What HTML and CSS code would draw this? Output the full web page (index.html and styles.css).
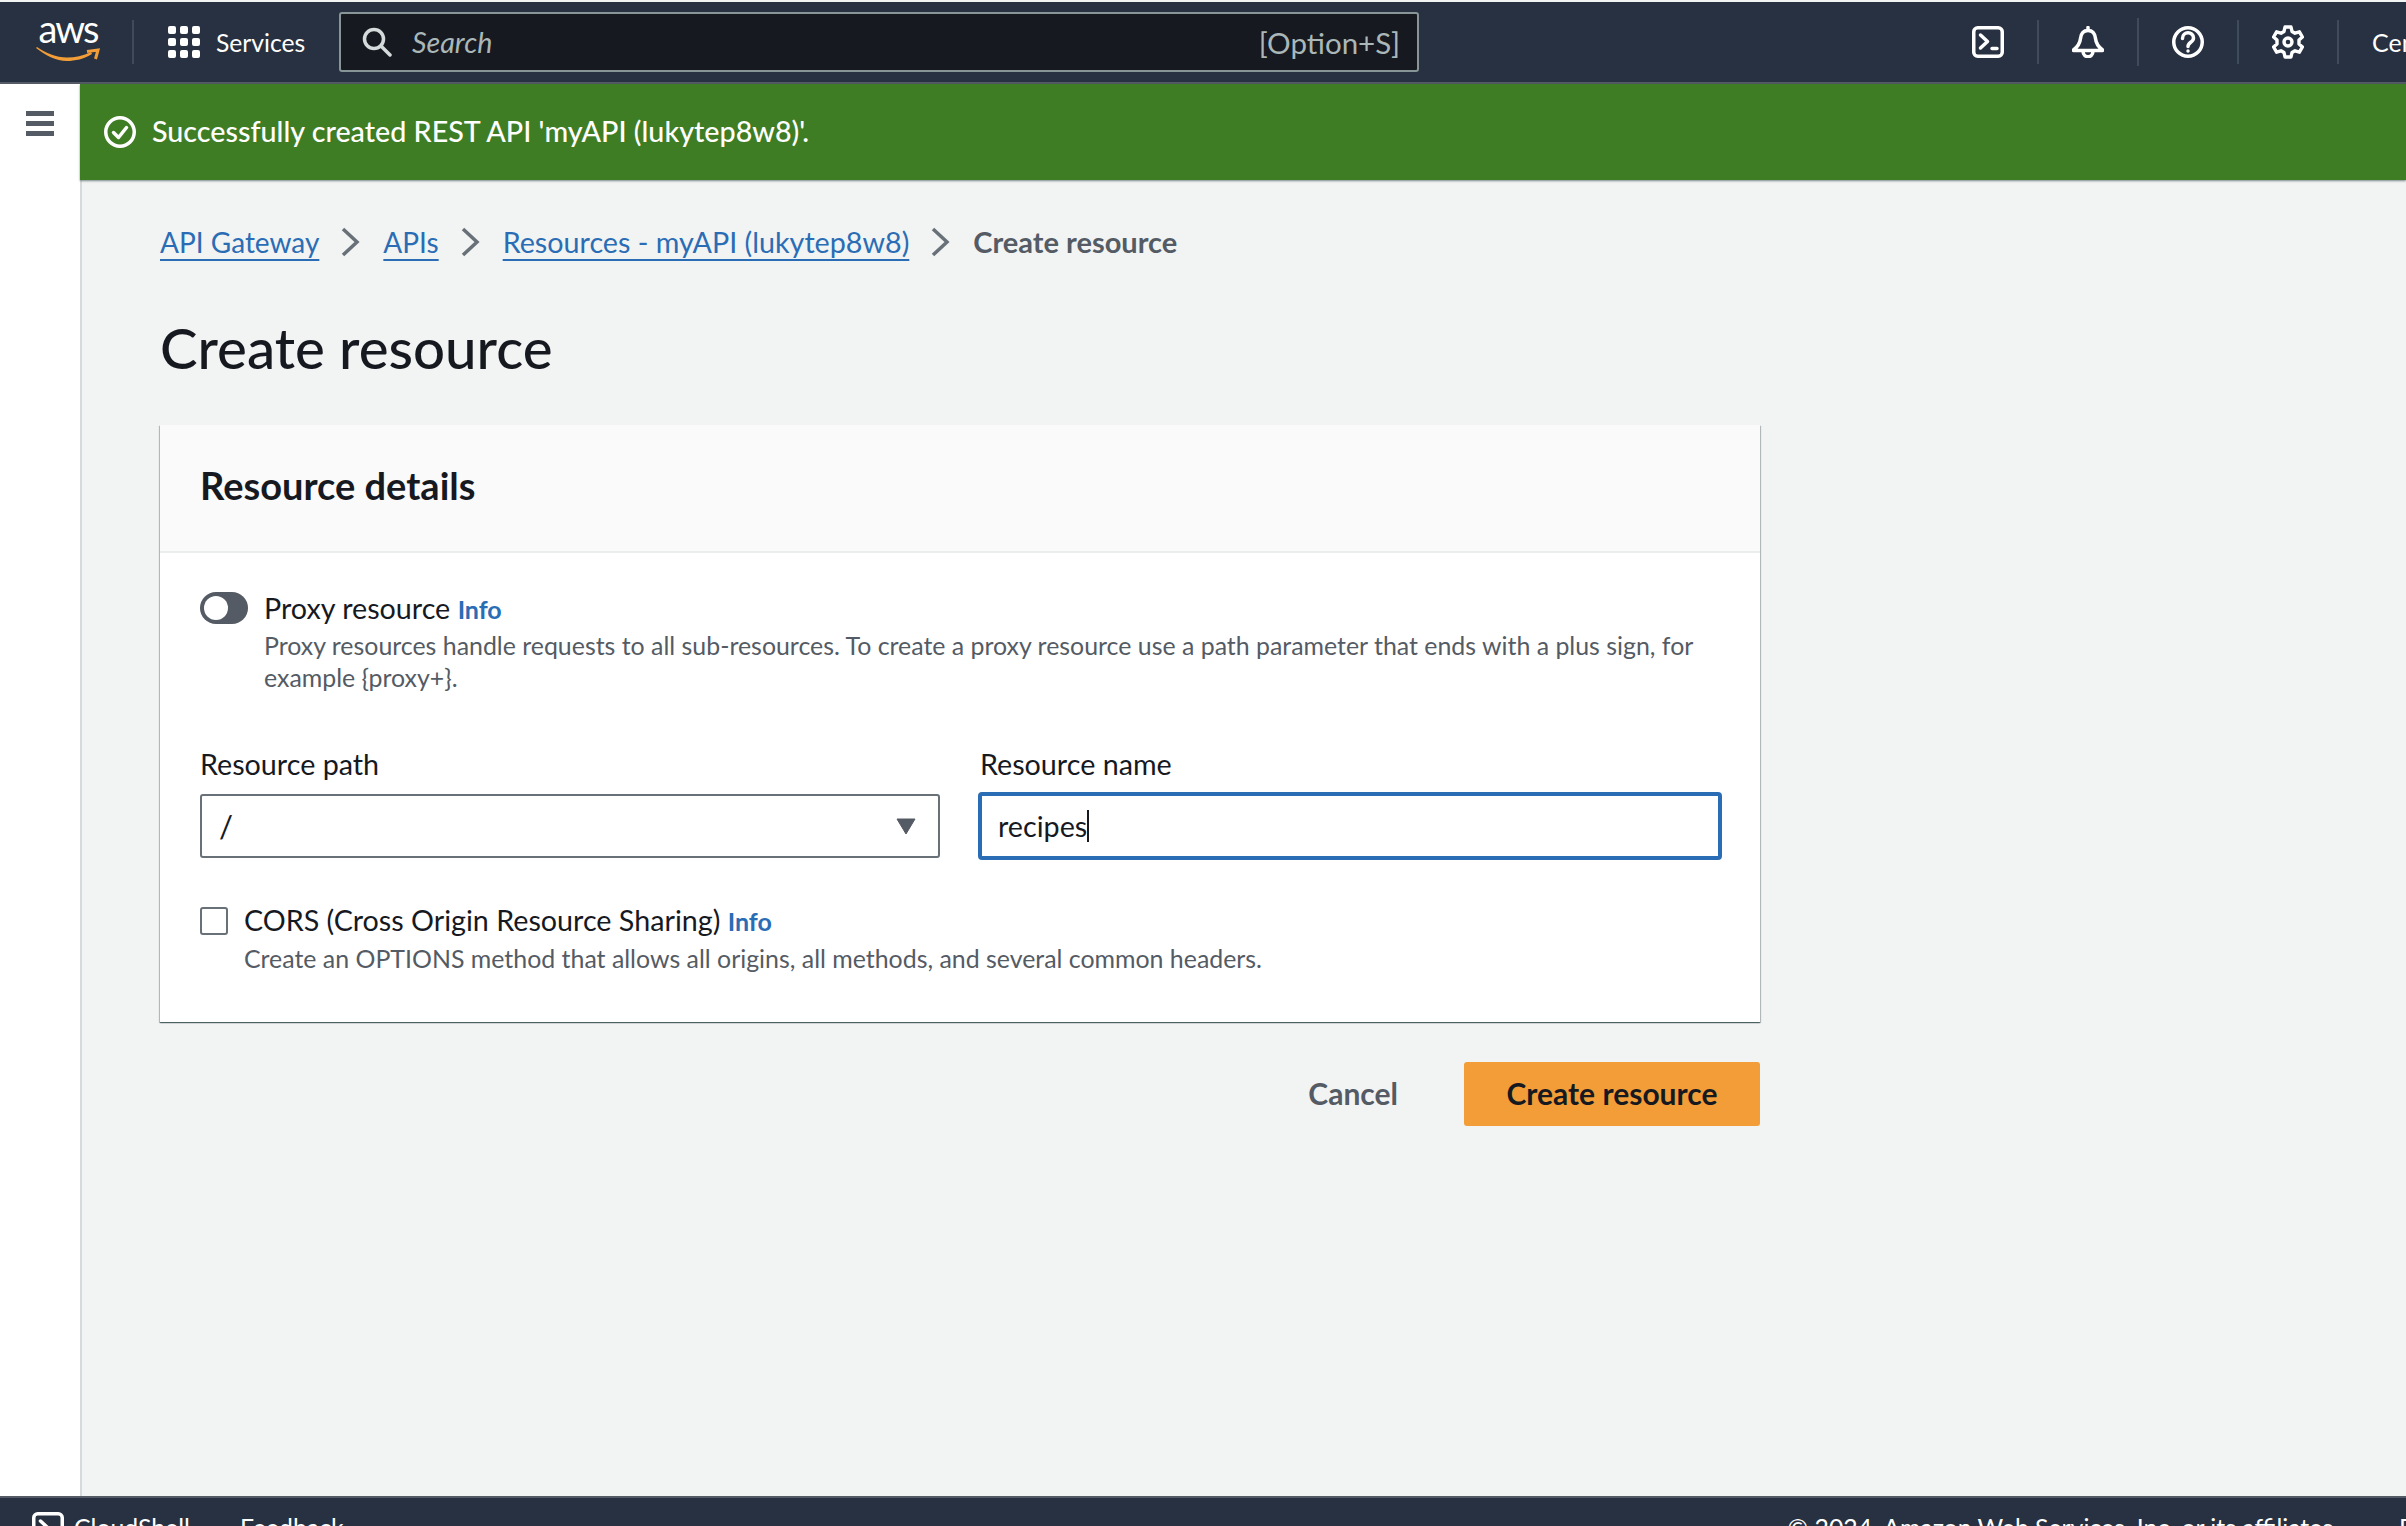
FILE: index.html
```html
<!DOCTYPE html>
<html lang="en">
<head>
  <meta charset="UTF-8">
  <title>Create resource</title>
  <link rel="stylesheet" href="styles.css">
</head>
<body>
  <header class="topnav">
    <div class="logo">
      <span class="logo-text">aws</span>
      <svg class="logo-smile" width="64" height="15" viewBox="0 0 64 15">
        <path d="M0 1C9 8 20 14 31 14 39 14 48 12 56 7L55 5C47 9 39 10.500 31 10.500 20 10.500 10 6 1 0z" fill="#f29d38"/>
        <path d="M51 4.500l11-1.500-2.500 9" fill="none" stroke="#f29d38" stroke-width="3"/>
      </svg>
    </div>
    <span class="nav-sep sep-logo"></span>
    <svg class="grid-icon" width="32" height="32" viewBox="0 0 32 32" fill="#fff">
      <rect x="0" y="0" width="8" height="8" rx="2"/><rect x="12" y="0" width="8" height="8" rx="2"/><rect x="24" y="0" width="8" height="8" rx="2"/>
      <rect x="0" y="12" width="8" height="8" rx="2"/><rect x="12" y="12" width="8" height="8" rx="2"/><rect x="24" y="12" width="8" height="8" rx="2"/>
      <rect x="0" y="24" width="8" height="8" rx="2"/><rect x="12" y="24" width="8" height="8" rx="2"/><rect x="24" y="24" width="8" height="8" rx="2"/>
    </svg>
    <span class="services">Services</span>
    <div class="search">
      <svg width="30" height="30" viewBox="0 0 30 30" fill="none" stroke="#d5dbdb" stroke-width="3.500">
        <circle cx="12" cy="12" r="9.500"/><path d="M19 19l9 9" stroke-linecap="round"/>
      </svg>
      <span class="search-text">Search</span>
      <span class="search-key">[Option+S]</span>
    </div>
    <div class="nav-icons">
      <span class="nav-cell">
        <svg width="32" height="32" viewBox="0 0 32 32" fill="none" stroke="#fff" stroke-width="3.500" stroke-linecap="round" stroke-linejoin="round">
          <rect x="1.750" y="1.750" width="28.500" height="28.500" rx="4"/><path d="M8.500 9l7 6.500-7 6.500M20 22.500h5"/>
        </svg>
      </span>
      <span class="nav-cell nav-cell-tall">
        <svg width="32" height="32" viewBox="0 0 32 32" fill="none" stroke="#fff" stroke-width="3.500" stroke-linecap="round" stroke-linejoin="round">
          <path d="M16 1.500v3M16 4.500c-4.500 0-7 3.500-7.500 8-.5 5-2.500 8-7 11.500v.5h29v-.5c-4.500-3.500-6.500-6.500-7-11.500-.5-4.500-3-8-7.500-8z"/><path d="M11 25c0 7.500 10 7.500 10 0"/>
        </svg>
      </span>
      <span class="nav-cell">
        <svg width="32" height="32" viewBox="0 0 32 32" fill="none" stroke="#fff" stroke-width="3.500" stroke-linecap="round" stroke-linejoin="round">
          <circle cx="16" cy="16" r="14.250"/><path d="M10.500 12.500c0-7.500 11-7.500 11-.5 0 4.500-5.500 4-5.500 8.500"/><path d="M16 25v.1"/>
        </svg>
      </span>
      <span class="nav-cell">
        <svg width="32" height="34" viewBox="0 0 32 34" fill="none" stroke="#fff" stroke-width="3.400" stroke-linejoin="round">
          <path d="M13 2h6l1 4.500 3 1.700 4.400-1.400 3 5.200-3.400 3.100v3.800l3.400 3.100-3 5.200-4.400-1.400-3 1.700-1 4.500h-6l-1-4.500-3-1.700-4.400 1.400-3-5.200 3.400-3.100v-3.800l-3.400-3.100 3-5.200 4.400 1.400 3-1.700z"/>
          <circle cx="16" cy="17" r="4"/>
        </svg>
      </span>
      <span class="nav-account">Central</span>
    </div>
  </header>

  <div class="layout">
    <aside class="sidebar">
      <div class="hamburger"><span></span><span></span><span></span></div>
    </aside>
    <div class="content">
      <div class="flash">
        <svg width="32" height="32" viewBox="0 0 32 32" fill="none" stroke="#fff" stroke-width="3.500" stroke-linecap="round" stroke-linejoin="round">
          <circle cx="16" cy="16" r="14.250"/><path d="M9.500 16.500l5 5 8-10"/>
        </svg>
        <span class="flash-text">Successfully created REST API 'myAPI (lukytep8w8)'.</span>
      </div>

      <main class="main">
        <nav class="crumbs">
          <a class="crumb-short" href="#">API Gateway</a>
          <svg class="crumb-sep" width="20" height="30" viewBox="0 0 20 30"><path d="M2 2l14 13L2 28" fill="none" stroke="#687078" stroke-width="3.500"/></svg>
          <a class="crumb-short" href="#">APIs</a>
          <svg class="crumb-sep" width="20" height="30" viewBox="0 0 20 30"><path d="M2 2l14 13L2 28" fill="none" stroke="#687078" stroke-width="3.500"/></svg>
          <a href="#">Resources - myAPI (lukytep8w8)</a>
          <svg class="crumb-sep" width="20" height="30" viewBox="0 0 20 30"><path d="M2 2l14 13L2 28" fill="none" stroke="#687078" stroke-width="3.500"/></svg>
          <span class="crumb-current">Create resource</span>
        </nav>

        <h1>Create resource</h1>

        <section class="card">
          <div class="card-header">
            <h2>Resource details</h2>
          </div>
          <div class="card-body">
            <div class="option">
              <span class="toggle"><span class="toggle-knob"></span></span>
              <div>
                <div class="option-label">Proxy resource <a class="info" href="#">Info</a></div>
                <p class="option-desc">Proxy resources handle requests to all sub-resources. To create a proxy resource use a path parameter that ends with a plus sign, for example {proxy+}.</p>
              </div>
            </div>

            <div class="fields">
              <div class="field">
                <label>Resource path</label>
                <div class="select">
                  <span class="select-value">/</span>
                  <svg width="20" height="17" viewBox="0 0 20 17"><path d="M1 1h18L10 16z" fill="#545b64" stroke="#545b64" stroke-linejoin="round"/></svg>
                </div>
              </div>
              <div class="field">
                <label>Resource name</label>
                <div class="text-input"><span class="typed">recipes</span></div>
              </div>
            </div>

            <div class="option option-cors">
              <span class="checkbox"></span>
              <div>
                <div class="option-label">CORS (Cross Origin Resource Sharing) <a class="info" href="#">Info</a></div>
                <p class="option-desc">Create an OPTIONS method that allows all origins, all methods, and several common headers.</p>
              </div>
            </div>
          </div>
        </section>

        <div class="actions">
          <button class="btn-link">Cancel</button>
          <button class="btn-primary">Create resource</button>
        </div>
      </main>
    </div>
  </div>

  <footer class="bottombar">
    <svg width="32" height="32" viewBox="0 0 32 32" fill="none" stroke="#fff" stroke-width="3.500" stroke-linecap="round" stroke-linejoin="round">
      <rect x="1.750" y="1.750" width="28.500" height="28.500" rx="4"/><path d="M8.500 9l7 6.500-7 6.500M20 22.500h5"/>
    </svg>
    <span class="foot-shell">CloudShell</span>
    <span class="foot-feedback">Feedback</span>
    <span class="foot-copy">© 2024, Amazon Web Services, Inc. or its affiliates.</span>
    <span class="foot-privacy">Privacy</span>
  </footer>
</body>
</html>
```

FILE: styles.css
```css
* {
  box-sizing: border-box;
}
html, body {
  height: 100%;
}
body {
  margin: 0;
  height: 1526px;
  overflow: hidden;
  display: flex;
  flex-direction: column;
  padding-top: 2px;
  font-family: "Lato", "Liberation Sans", sans-serif;
  font-size: 28.7px;
  color: #16191f;
  background-color: #f2f3f3;
}

/* top nav */
.topnav {
  flex: none;
  height: 82px;
  display: flex;
  align-items: center;
  overflow: hidden;
  background-color: #273141;
  border-bottom: 2px solid #545b64;
  color: #fff;
}
.logo {
  width: 64px;
  margin-left: 36px;
  position: relative;
  height: 44px;
  flex: none;
}
.logo-text {
  display: block;
  font-size: 38px;
  line-height: 16px;
  letter-spacing: -2px;
  text-align: center;
}
.logo-smile {
  position: absolute;
  left: 0;
  top: 27px;
}
.nav-sep {
  flex: none;
  width: 2px;
  height: 44px;
  background-color: #3f4a5a;
}
.sep-logo {
  margin-left: 32px;
}
.grid-icon {
  flex: none;
  margin-left: 34px;
}
.services {
  margin-left: 16px;
  width: 106px;
  font-size: 24.7px;
  flex: none;
}
.search {
  flex: none;
  margin-left: 17px;
  width: 1080px;
  height: 60px;
  display: flex;
  align-items: center;
  padding: 0 17px 0 21px;
  background-color: #16191f;
  border: 2px solid #879596;
  border-radius: 3px;
}
.search-text {
  margin-left: 20px;
  font-style: italic;
  color: #aab7b8;
}
.search-key {
  margin-left: auto;
  font-size: 29.500px;
  color: #aab7b8;
}
.nav-icons {
  flex: none;
  display: flex;
  align-items: center;
  margin-left: 520px;
}
.nav-cell {
  flex: none;
  width: 100px;
  height: 44px;
  display: flex;
  align-items: center;
  justify-content: center;
  border-right: 2px solid #3f4a5a;
}
.nav-cell-tall {
  height: 48px;
}
.nav-account {
  margin-left: 33px;
  font-size: 25px;
  flex: none;
}

/* layout */
.layout {
  flex: 1;
  min-height: 0;
  display: flex;
}
.sidebar {
  flex: none;
  width: 82px;
  background-color: #fff;
  border-right: 2px solid #d5dbdb;
  padding: 27px 0 0 26px;
}
.hamburger {
  width: 28px;
  display: flex;
  flex-direction: column;
  gap: 5px;
}
.hamburger span {
  height: 5px;
  background-color: #545b64;
}
.content {
  flex: 1;
  min-width: 0;
  margin-left: -2px;
  position: relative;
}
.flash {
  height: 96px;
  display: flex;
  align-items: center;
  gap: 16px;
  padding-left: 24px;
  background-color: #3f7d24;
  color: #fff;
  box-shadow: 0 1px 2px rgba(0, 28, 36, 0.5);
}
.flash-text {
  font-weight: 500;
  margin-top: -2px;
}
.main {
  padding: 46px 0 0 80px;
}

/* breadcrumbs */
.crumbs {
  display: flex;
  align-items: center;
  height: 32px;
}
.crumbs a {
  color: #2a6db5;
  text-decoration: underline;
  text-decoration-thickness: 2px;
  text-underline-offset: 6px;
}
.crumbs a.crumb-short {
  font-size: 28px;
}
.crumb-sep {
  margin: 0 22px 0 22px;
}
.crumb-current {
  margin-top: -1px;
  font-size: 29px;
  font-weight: 700;
  color: #545b64;
}
h1 {
  margin: 53px 0 0;
  font-size: 56.4px;
  line-height: 72px;
  font-weight: 500;
}

/* card */
.card {
  width: 1600px;
  margin-top: 42px;
  background-color: #fff;
  box-shadow: 0 1px 1px 0 rgba(0, 28, 36, 0.5), 1px 1px 1px 0 rgba(0, 28, 36, 0.2), -1px 1px 1px 0 rgba(0, 28, 36, 0.2);
}
.card-header {
  height: 128px;
  display: flex;
  align-items: center;
  padding: 0 0 6px 40px;
  background-color: #fafafa;
  border-bottom: 2px solid #eaeded;
}
h2 {
  margin: 0;
  font-size: 38px;
  font-weight: 700;
}
.card-body {
  padding: 37px 40px 48px;
}
.option {
  display: flex;
  gap: 16px;
}
.option-label {
  line-height: 36px;
  margin-bottom: 2px;
}
.option-desc {
  margin: 0;
  font-size: 24.900px;
  line-height: 32px;
  color: #545b64;
}
.info {
  color: #2a6db5;
  font-size: 25px;
  font-weight: 700;
  text-decoration: none;
}
.toggle {
  flex: none;
  width: 48px;
  height: 32px;
  margin-top: 2px;
  padding: 4px;
  background-color: #545b64;
  border-radius: 16px;
}
.toggle-knob {
  display: block;
  width: 24px;
  height: 24px;
  background-color: #fff;
  border-radius: 50%;
}

/* fields */
.fields {
  display: grid;
  grid-template-columns: 740px 740px;
  gap: 40px;
  margin-top: 52px;
}
.field label {
  display: block;
  line-height: 38px;
  margin-bottom: 11px;
}
.select {
  height: 64px;
  display: flex;
  align-items: center;
  justify-content: space-between;
  padding: 0 22px 0 17px;
  border: 2px solid #687078;
  border-radius: 3px;
}
.select-value {
  font-size: 31px;
}
.text-input {
  height: 68px;
  margin: -2px;
  display: flex;
  align-items: center;
  padding: 0 16px;
  border: 4px solid #2a6db5;
  border-radius: 4px;
}
.typed {
  border-right: 2px solid #16191f;
  line-height: 32px;
}
.option-cors {
  margin-top: 44px;
}
.option-cors .option-label {
  margin-bottom: 3px;
}
.checkbox {
  flex: none;
  width: 28px;
  height: 28px;
  margin-top: 5px;
  border: 2px solid #687078;
  border-radius: 3px;
  background-color: #fff;
}

/* actions */
.actions {
  width: 1600px;
  margin-top: 40px;
  display: flex;
  justify-content: flex-end;
  align-items: center;
  gap: 66px;
}
button {
  font-family: inherit;
  font-size: 30px;
  font-weight: 700;
  border: none;
  padding: 0 0 2px;
  cursor: pointer;
}
.btn-link {
  background: none;
  color: #545b64;
}
.btn-primary {
  width: 296px;
  height: 64px;
  background-color: #f29d38;
  border-radius: 3px;
  color: #16191f;
}

/* bottom bar */
.bottombar {
  flex: none;
  height: 30px;
  display: flex;
  align-items: flex-start;
  padding: 14px 0 0 32px;
  overflow: hidden;
  background-color: #273141;
  border-top: 2px solid #545b64;
  color: #fff;
  font-size: 24.800px;
  line-height: 32px;
  white-space: nowrap;
}
.bottombar svg {
  flex: none;
}
.foot-shell {
  margin-left: 10px;
}
.foot-feedback {
  margin-left: 50px;
}
.foot-copy {
  margin-left: auto;
}
.foot-privacy {
  margin-left: 60px;
  margin-right: -72px;
}
```
